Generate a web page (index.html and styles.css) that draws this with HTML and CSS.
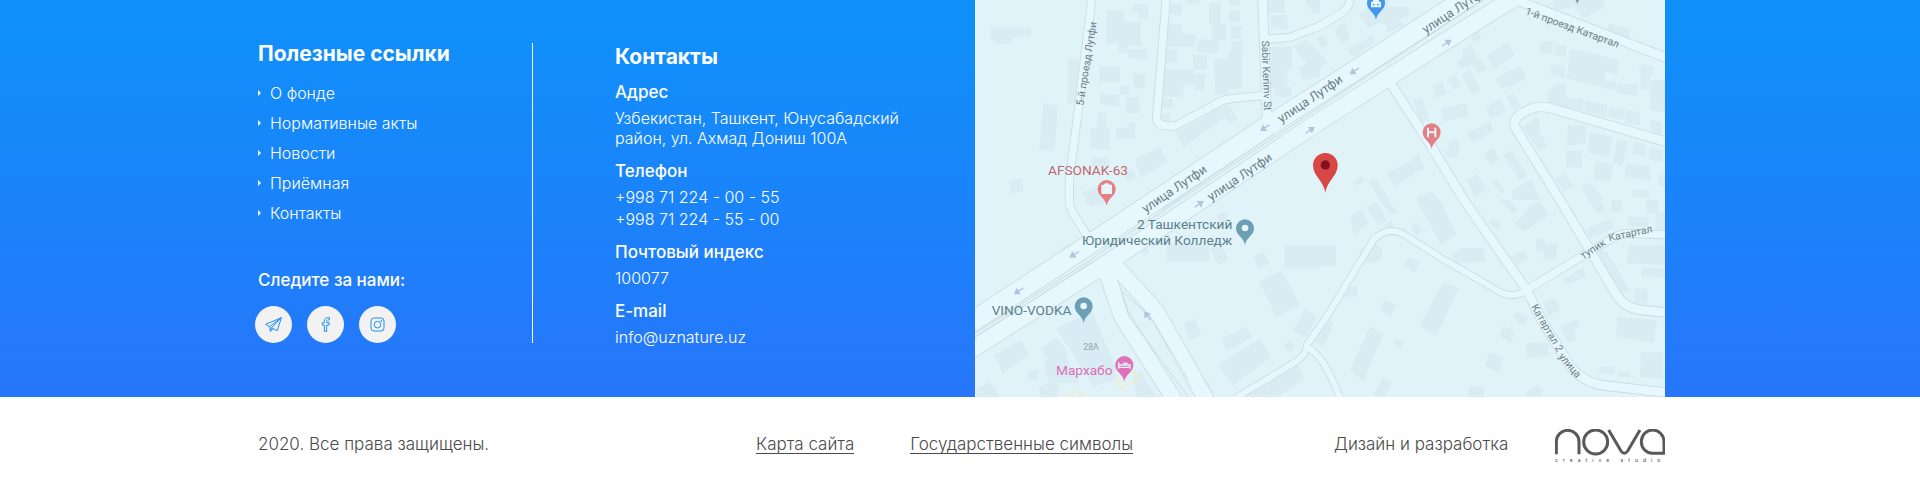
FILE: index.html
```html
<!DOCTYPE html>
<html lang="ru">
<head>
<meta charset="utf-8">
<meta name="viewport" content="width=device-width, initial-scale=1">
<title>Контакты</title>
<link rel="stylesheet" href="styles.css">
</head>
<body>
<footer>
  <section class="info">
    <div class="container info-grid">
      <div class="links-col">
        <nav aria-labelledby="links-title">
          <h2 class="title" id="links-title">Полезные ссылки</h2>
          <ul class="links">
            <li><a href="#about">О фонде</a></li>
            <li><a href="#acts">Нормативные акты</a></li>
            <li><a href="#news">Новости</a></li>
            <li><a href="#reception">Приёмная</a></li>
            <li><a href="#contacts">Контакты</a></li>
          </ul>
        </nav>
        <h3 class="subtitle follow">Следите за нами:</h3>
        <div class="social">
          <a href="#telegram" aria-label="Telegram"><svg viewBox="0 0 51 45"><path d="M49 2 2 22l12 7 2 14 9-8 12 6zM14 29 49 2 20 32l5 3M20 32l-4 11"/></svg></a>
          <a href="#facebook" aria-label="Facebook"><svg viewBox="0 0 51 45"><path d="M22 43V24h-6v-7h6v-5c0-7 4-10 10-10h5v7h-4c-3 0-4 1-4 4v4h8l-1 7h-7v19z"/></svg></a>
          <a href="#instagram" aria-label="Instagram"><svg viewBox="0 0 51 45"><rect x="6" y="3" width="39" height="39" rx="9"/><circle cx="25.500" cy="23" r="10"/><circle cx="37" cy="12" r="1.500"/></svg></a>
        </div>
      </div>
      <address class="contacts">
        <h2 class="title">Контакты</h2>
        <h3 class="subtitle">Адрес</h3>
        <p>Узбекистан, Ташкент, Юнусабадский<br>район, ул. Ахмад Дониш 100А</p>
        <h3 class="subtitle">Телефон</h3>
        <p class="phones"><a href="tel:+998712240055">+998 71 224 - 00 - 55</a><br><a href="tel:+998712245500">+998 71 224 - 55 - 00</a></p>
        <h3 class="subtitle">Почтовый индекс</h3>
        <p>100077</p>
        <h3 class="subtitle">E-mail</h3>
        <p><a href="mailto:info@uznature.uz">info@uznature.uz</a></p>
      </address>
      <svg class="map" viewBox="0 0 2070 1191" preserveAspectRatio="xMidYMid slice" role="img" aria-label="Карта проезда">
        <defs>
          <symbol id="pin" viewBox="-30 -30 60 84" overflow="visible"><path d="M0 50C-3 28-27 22-27 0a27 27 0 0 1 54 0C27 22 3 28 0 50z"/></symbol>
          <g id="arrow"><path d="M14 0H-6M-4-8-16 0l12 8z"/></g>
          <g id="roads">
            <path class="w24" d="M350 0 310 330 283 540V600Q283 625 300 650L345 720"/>
            <path class="w24" d="M573 0 545 350Q545 378 580 378H600L740 303Q760 294 870 287"/>
            <path class="w28" d="M863 0 877 380"/>
            <path class="w24" d="M875 118 945 112 1035 78 1095 42Q1122 25 1125 0"/>
            <path class="w28" d="M1615-3 2075 174"/>
            <path class="w28" d="M1250 255 1370 440 1470 605 1655 870 1700 960 1780 1090Q1820 1150 1900 1158L2075 1178"/>
            <path class="w28" d="M2075 426 1740 328Q1690 310 1650 335 1605 355 1625 390L1755 600 1925 885Q1950 925 2000 930L2075 938"/>
            <path class="w24" d="M1655 870 1835 760 1920 710Q1940 700 1970 700L2075 705"/>
            <path class="w20" d="M1655 870Q1610 900 1565 870L1400 775 1290 705Q1240 675 1195 720L1055 950 995 1035Q1000 1060 955 1090L780 1195M995 1040Q1050 1070 1095 1195"/>
            <path class="w46" d="M385 790 440 950 605 1210M410 785 545 935 700 1210"/>
            <path class="w54" d="M-20 1055 385 797 670 607 1003 384 1413 122 1640-20"/>
            <path class="w60" d="M-20 973 133 872 300 762 872 382 1140 212 1500-22"/>
          </g>
        </defs>
        <rect class="land" width="2070" height="1191"/>
        <g class="buildings">
          <path transform="translate(-15)" d="M62 82H183V110H125V132H75V120H62zM409 30H461V65H513V138H475V157H445V130H409zM485 22 500 12 535 15V55H505V35H485zM474 147H530V180L474 175zM387 200H450V245H387zM491 218 525 224V268L491 262zM450 256H478V284H450zM390 283 449 285V320L390 312zM468 292H508V339H468zM295 177H325V310H293zM220 310 264 318 254 454 208 450zM383 337 408 340V384H419V450L362 444V386L383 380zM438 384 475 382V367H495V417H438zM365 472H417V498H365zM118 542 156 534 160 574 122 580zM494 478 570 442 593 486 514 532zM470 515 490 506 497 535 465 545zM335 580 375 560 400 600H350zM600 12 635 10V45L600 42zM648 0H688V10L650 8zM718 8H752V72H768V122H728V75H718zM777 0H810V18L777 14zM777 33H810V68L777 64zM782 77H814V116H782zM592 70 635 72V100L676 102V140H592zM683 125 697 117 745 122V160L720 162 683 155zM785 123H820V155H815V268H775V150L785 152zM585 147 622 150V190L580 188zM580 205H670V164H710V210H672V254H640V290H580zM672 222H705V272L672 268zM733 177H775V284H735zM570 297H608V324H570zM575 340H600V366H575zM618 400 750 322 780 315 803 358 780 370 765 352 640 442zM890 0H944V40L890 36zM903 45H953V88L903 84zM895 140H966V206H953V262H965V290H915V268H900zM970 140 1010 118 1050 185V230L1000 240 985 205 1010 190zM1005 0H1050V40H1030z"/>
          <path transform="translate(1005)" d="M145 45 175 20 190 0H235V20L298 22V44L265 60 285 75 232 98 230 75 205 70 175 84zM80 80 105 65 120 118 95 130 78 105zM18 115 40 105 55 135 35 145zM112 150 185 108 196 128 128 172zM0 130 55 185 0 225zM480 95 505 88 515 115 490 128zM455 150 485 138 498 170 510 175 530 205 505 220 485 195 455 205 440 185 460 170zM532 168 592 128 612 165 552 208zM368 260 395 245 412 280 380 295zM411 238 437 225 452 258 430 268zM454 225 480 208 513 272 488 284zM555 240 585 218 630 197 648 235 600 260 575 264zM310 300 335 290 358 362 330 365zM393 325 468 310 474 348 402 365zM525 325 570 297 588 330 545 358zM588 290 612 282 632 320 610 330zM470 400 540 366 552 392 488 430zM410 425 440 415 450 440 440 470 420 478 406 455 418 447zM230 520 305 482 322 515 255 560zM305 472 325 464 346 505 322 515zM130 545 155 528 164 540 140 557zM176 545 198 538 240 600H210zM522 462 550 445 568 480 540 496zM580 465 605 452 652 528 628 540zM470 540 500 523 530 570 495 588zM542 545 560 535 585 575 575 580zM605 570 665 540 690 600H610zM320 590 370 574 385 600H320zM690 125 728 122V162L690 158zM736 135 768 138V170L736 165zM780 147 925 178V222L885 215 880 262 770 235zM725 192 765 200V236L722 225zM722 12 740 0H880L885 20 820 55 795 20 735 30zM895 72 960 85 958 115 890 105zM985 205 1000 192 1030 200V224H1018V272L992 265V220zM925 250 983 256V288L922 280zM882 240 920 246V270L880 264zM1020 240H1065V338L1020 330zM708 275 745 250 768 258V292L820 298V332L720 308zM828 303 890 314V350L822 336zM898 320 943 328V360L895 350zM950 330 990 338V375L945 370zM1020 360 1055 366V405L1020 398zM635 380 685 350 690 395 710 440 690 455zM775 374 833 378 825 430 768 438zM838 396 908 412 898 474 835 458zM920 418 955 424 935 502 908 490zM970 425 1006 432V470L967 460zM1020 440 1058 450V487L1015 478zM770 452H816V505L768 500zM858 484 910 492 900 546 850 535zM950 488 1022 500V545L945 528zM735 540 760 520 792 555 765 575zM815 560 840 548 885 600H835zM970 568H1018V592L965 588zM1045 525H1065V560L1045 555z"/>
          <path transform="translate(-15 600)" d="M340 0H430L365 22zM275 140 295 135 305 155 285 165zM590 135H717V185H590zM515 140H535V165H520zM720 145 755 138 775 180 745 195zM740 45 765 35 775 60 750 75zM850 170 880 157 898 190 865 208zM943 135H1050V206H943zM868 245 935 212 990 315 918 348zM640 370 675 357 693 405 660 420zM756 415 830 380 846 410 770 455zM742 495 870 418 904 470 790 555zM968 395 1005 328 1040 350 1010 412zM943 435 965 420 974 445 955 458zM820 575 985 495 1002 538 920 591H830zM695 560 715 545 730 580 705 591zM72 465 155 422 178 465 98 518zM213 445 260 413 283 440 300 500 330 550H235L222 490 235 478zM258 385 365 335 437 500 440 540 370 558zM172 510 208 508 200 542 175 540zM208 560 245 545 270 560 255 591H210zM20 565 60 545 90 591H20zM490 530 510 515 560 591H500z"/>
          <path transform="translate(1005 600)" d="M320 0H390L440 105 392 132zM120 50 155 28 175 70 130 106zM168 20 200 5 230 60 205 75zM205 0H235L262 35 245 45zM220 80 240 63 255 75 235 90zM300 80 320 65 342 90 318 106zM0 133H78V200H0zM150 150 195 130 218 150 210 180 180 190 155 180zM280 195 295 172 328 185 315 218zM98 260 140 257 143 290 105 290zM208 325 225 300 258 315 240 350zM330 375 400 245 446 265 378 410zM180 380 220 400 160 543 120 510zM250 430 260 413 282 425 270 445zM35 350 72 370 40 440 0 418zM0 340 15 350 0 370zM190 585 220 533 244 548 225 591zM427 165 450 145 523 143 525 186 440 188zM537 65 550 50 577 80 560 92zM570 0H600L624 30 610 42zM615 70 650 35 655 15 690 5 718 45 640 95zM605 170 640 150 655 175 620 195zM677 120 700 113 705 130 746 130 735 175 700 182V155H680zM607 350 620 333 656 352 640 378zM700 310 735 295 753 325 715 350zM750 380 800 358 810 375 790 395 800 420 775 430zM567 405 580 377 615 395 602 432zM648 430 716 427V468L650 472zM526 500 535 457 578 470 570 517zM473 591 480 556 524 562 520 591zM642 585 680 553 700 570 690 591zM760 240 820 200 828 230 775 252zM835 85 900 57 915 85 835 115zM860 150 890 155 958 270 930 282zM955 50H1016L1015 80H955zM905 0H936V33H902zM835 0H870L885 30 865 40zM1010 0H1045V42H1008zM1040 35H1065V90H1036zM958 133H1065V195L950 190zM1000 200 1065 208V235L993 225zM975 266H1013V310H975zM922 350 1040 360 1032 430 918 408zM992 457H1058V537L990 530zM870 500H914V525L868 520zM922 515 960 513 962 530 925 532z"/>
        </g>
        <use href="#roads" class="casing"/>
        <use href="#roads" class="surface"/>
        <path class="median" d="M0 1000 350 778 365 765 900 410 1540-10M0 1012 355 784M560 630 900 400M440 880 462 950 640 1191M437 870 530 955 640 1140"/>
        <g class="arrows">
          <use href="#arrow" transform="translate(133 872) rotate(-33)"/>
          <use href="#arrow" transform="translate(300 762) rotate(-33)"/>
          <use href="#arrow" transform="translate(872 382) rotate(-33)"/>
          <use href="#arrow" transform="translate(1140 212) rotate(-33)"/>
          <use href="#arrow" transform="translate(670 614) rotate(147)"/>
          <use href="#arrow" transform="translate(1003 392) rotate(147)"/>
          <use href="#arrow" transform="translate(1413 130) rotate(147)"/>
          <use href="#arrow" transform="translate(519 950) rotate(55)"/>
        </g>
        <path class="spot" d="M425 1142 475 1112 488 1138 440 1166zM270 1191 300 1172 330 1191"/>
        <g class="street">
          <text transform="translate(325 318) rotate(-81)">5-й проезд Лутфи</text>
          <text transform="translate(860 122) rotate(88)">Sabir Kerimv St</text>
          <text class="big" transform="translate(512 640) rotate(-34)">улица Лутфи</text>
          <text class="big" transform="translate(708 604) rotate(-34)">улица Лутфи</text>
          <text class="big" transform="translate(919 370) rotate(-34)">улица Лутфи</text>
          <text class="big" transform="translate(1352 102) rotate(-33)">улица Лутфи</text>
          <text transform="translate(1649 42) rotate(20)">1-й проезд Катартал</text>
          <text transform="translate(1825 778) rotate(-33)">тупик</text>
          <text transform="translate(1903 724) rotate(-12)">Катартал</text>
          <text transform="translate(1668 920) rotate(60)">Катартал 2</text>
          <text transform="translate(1750 1070) rotate(50)">улица</text>
          <text x="325" y="1049" class="house">28А</text>
        </g>
        <g class="place">
          <text class="red" x="219" y="524">AFSONAK-63</text>
          <text class="teal" x="772" y="688" text-anchor="end">2 Ташкентский</text>
          <text class="teal" x="772" y="735" text-anchor="end">Юридический Колледж</text>
          <text class="teal" x="50" y="946">VINO-VODKA</text>
          <text class="pink" x="243" y="1124">Мархабо</text>
        </g>
        <use href="#pin" class="pin-red" x="365" y="537" width="60" height="84"/>
        <path class="glyph" d="M379 554h8q0-5 8-5t8 5h8v28h-32z"/>
        <use href="#pin" class="pin-red" x="1340" y="367" width="60" height="84"/>
        <path class="glyph-line" d="M1359 383v29M1381 383v29M1359 397h22"/>
        <use href="#pin" class="pin-teal" x="780" y="655" width="60" height="84"/>
        <circle class="glyph" cx="810" cy="684" r="10"/>
        <use href="#pin" class="pin-teal" x="296" y="889" width="60" height="84"/>
        <circle class="glyph" cx="326" cy="918" r="10"/>
        <use href="#pin" class="pin-pink" x="418" y="1065" width="60" height="84"/>
        <path class="glyph-line thin" d="M431 1086v20M431 1102h34v5M431 1095h34v7M444 1090h14"/>
        <use href="#pin" class="pin-blue" x="1173" y="-21" width="60" height="84"/>
        <path class="glyph" d="M1188 5h6v-7h18v7h6v17h-30z"/>
        <path class="pin-blue" d="M1194 12h5v4h-5zM1206 12h5v4h-5z"/>
        <use href="#pin" class="pin-teal" x="1777" y="-36" width="60" height="84" transform="translate(0 -30)"/>
        <path class="pin-main" d="M1051 578C1046 543 1014 528 1014 496a37 37 0 0 1 74 0C1088 528 1056 543 1051 578z"/>
        <circle class="pin-dot" cx="1051" cy="495" r="14"/>
      </svg>
    </div>
  </section>
  <section class="container legal">
    <p>2020. Все права защищены.</p>
    <nav class="legal-links" aria-label="Дополнительно">
      <a href="#sitemap">Карта сайта</a>
      <a href="#symbols">Государственные символы</a>
    </nav>
    <div class="credit">
      <span>Дизайн и разработка</span>
      <a href="#nova" aria-label="Nova creative studio">
        <svg class="nova" viewBox="0 0 330 102">
          <path d="M4 76V38a34 34 0 0 1 68 0V76"/>
          <circle cx="122" cy="39" r="36"/>
          <path d="M161 3 198 66Q208 80 218 66L255 3"/>
          <path d="M327 73H292a34 35 0 1 1 35-35z"/>
          <text x="0" y="100">creative studio</text>
        </svg>
      </a>
    </div>
  </section>
</footer>
</body>
</html>
```
FILE: styles.css
```css
* { box-sizing: border-box; }

body {
  margin: 0;
  background: #fff;
  color: #4a4a4a;
  font-family: Inter, "Noto Sans", sans-serif;
  font-size: 16px;
  font-weight: 300;
  line-height: 20px;
}

h2, h3, p, ul { margin: 0; padding: 0; }
a { color: inherit; text-decoration: none; }

.container {
  width: 100%;
  max-width: 1410px;
  margin: 0 auto;
}

.info {
  background: linear-gradient(#0e91fa, #2776fa);
  color: #fff;
}

.info-grid {
  display: grid;
  grid-template-columns: 278fr 442fr 690fr;
}

.title {
  font-size: 21px;
  font-weight: 700;
  line-height: 28px;
}

.subtitle {
  font-size: 17px;
  font-weight: 500;
  line-height: 24px;
}

.links-col {
  margin: 43px 0 54px;
  border-right: 1px solid #fff;
}

.links-col .title {
  margin-top: -3px;
  padding-left: 3px;
}

.links {
  display: grid;
  gap: 10px;
  margin-top: 15px;
  padding-left: 3px;
  list-style: none;
}

.links a {
  display: flex;
  align-items: center;
  gap: 9px;
}

.links a::before {
  content: "";
  border: solid transparent;
  border-width: 3px 0 3px 3px;
  border-left-color: #fff;
}

.follow {
  margin-top: 45px;
  padding-left: 3px;
}

.social {
  display: flex;
  gap: 15px;
  margin-top: 14px;
}

.social a {
  display: grid;
  place-items: center;
  width: 37px;
  height: 37px;
  border-radius: 50%;
  background: #f2f2f2;
}

.social svg {
  width: 17px;
  height: 15px;
  fill: none;
  stroke: #1e90f8;
  stroke-width: 3;
  stroke-linejoin: round;
}

.contacts {
  padding: 43px 0 32px 82px;
  font-style: normal;
}

.contacts .title { margin-bottom: 9px; }
.contacts p { margin: 4px 0 11px; }
.contacts .phones { margin: 3px 0 10px; line-height: 22px; }

.map {
  display: block;
  width: 100%;
  height: 100%;
  min-height: 397px;
  font-family: Roboto, sans-serif;
  font-weight: 400;
}

.land { fill: #e0f3f8; }
.buildings { fill: #d9ebf3; }

.casing, .surface { fill: none; stroke-linejoin: round; }
.casing { stroke: #cbdce3; }
.surface { stroke: #e6f7fe; }
.casing { --edge: 5px; }
.surface { --edge: 0px; }
.w20 { stroke-width: calc(18px + var(--edge)); }
.w24 { stroke-width: calc(22px + var(--edge)); }
.w28 { stroke-width: calc(26px + var(--edge)); }
.w46 { stroke-width: calc(46px + var(--edge)); }
.w54 { stroke-width: calc(50px + var(--edge)); }
.w60 { stroke-width: calc(58px + var(--edge)); }

.median { fill: none; stroke: #cbdce3; stroke-width: 3; }
.arrows { fill: #b3c3de; stroke: #b3c3de; stroke-width: 4; }
.spot { fill: none; stroke: #f3ecc0; stroke-width: 4; }

.street { fill: #6d7f86; font-size: 31px; }
.street .big { font-size: 38px; }
.street .house { fill: #93a5ad; font-size: 26px; }

.place { font-size: 41px; }
.place .red { fill: #c0696f; }
.place .teal { fill: #5c7f8c; }
.place .pink { fill: #dc6fb8; }

.pin-red { fill: #e57f86; }
.pin-teal { fill: #6c9fb4; }
.pin-pink { fill: #dd72ba; }
.pin-blue { fill: #3f97ee; }
.pin-main { fill: #d84646; }
.pin-dot { fill: #84121c; }
.glyph { fill: #e6f5fa; }
.glyph-line { fill: none; stroke: #e6f5fa; stroke-width: 6; }
.glyph-line.thin { stroke-width: 4; }

.legal {
  display: grid;
  grid-template-columns: 498fr 578fr 334fr;
  align-items: center;
  min-height: 94px;
  font-size: 17px;
  line-height: 24px;
}

.legal > * { padding-left: 3px; }

.legal-links {
  display: flex;
  gap: 56px;
}

.legal-links a { border-bottom: 1px solid #4a4a4a; line-height: 18px; }

.credit {
  display: flex;
  align-items: center;
  justify-content: space-between;
}

.nova {
  display: block;
  width: 110px;
  height: 34px;
  margin-top: 4px;
  fill: none;
  stroke: #595959;
  stroke-width: 9;
}

.nova text {
  fill: #595959;
  stroke: none;
  font-size: 15px;
  font-weight: 500;
  letter-spacing: 15px;
}
```
